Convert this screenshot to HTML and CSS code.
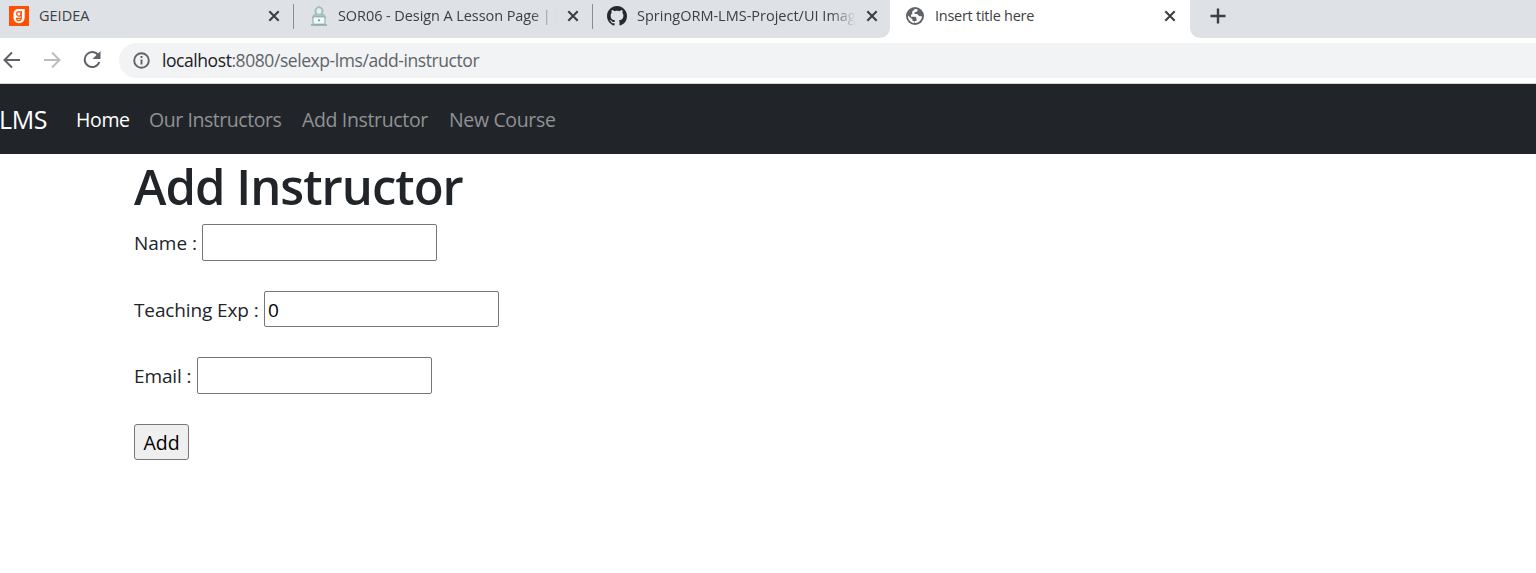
FILE: index.html
```
<!DOCTYPE html>
<html lang="en">
<head>
<meta charset="utf-8">
<title>Insert title here</title>
<link rel="stylesheet" href="styles.css">
</head>
<body>
<div class="tabs">
  <div class="tab-group">
    <div class="tab tab-geidea">
      <svg class="favicon" width="20" height="20" viewBox="0 0 20 20"><path fill="#ff4f00" d="M0 0h20v20H0z"/><path fill="#fff" d="M9.500 3H15.700V11C15.700 14.800 13.300 17.200 10 17.200C6.800 17.200 4.500 15 4.500 11.600V8C4.500 5 6.500 3 9.500 3z"/><g fill="none" stroke="#ff4f00" stroke-width="1.200"><circle cx="9.900" cy="7.900" r="2.200"/><path d="M12.300 5v6.700c0 2-1 2.900-2.400 2.900s-2.300-.8-2.300-2.200h4.500"/></g></svg>
      <span class="tab-title"><span class="t-geidea">GEIDEA</span></span>
      <svg class="close" width="12" height="12" viewBox="0 0 12 12"><path d="M1.300 1.300l9.400 9.400M10.700 1.300l-9.400 9.400"/></svg>
    </div>
    <div class="tab tab-lesson">
      <svg class="favicon" width="18" height="20" viewBox="0 0 18 20"><path fill="#a9c4c3" stroke="#8fb0ae" stroke-width=".8" d="M2.500 12Q2.500 8.500 6 8L5 6V4.500Q5.500 1.500 9 .5Q12.500 1.500 13 4.500V6l-1 2q3.500.5 3.500 4z"/><ellipse cx="9" cy="5" rx="2.400" ry="2.700" fill="#e9f0f0"/><rect x="3" y="10.800" width="12" height="7.400" rx="1" fill="#f4f8f7" stroke="#86aaa8"/><path d="M1 19h16" stroke="#86aaa8" stroke-width="1.500"/><circle cx="9" cy="14.300" r="1.100" fill="#709d9a"/></svg>
      <span class="tab-title faded"><span class="t-lesson">SOR06 - Design A Lesson Page | E</span></span>
      <svg class="close" width="12" height="12" viewBox="0 0 12 12"><path d="M1.300 1.300l9.400 9.400M10.700 1.300l-9.400 9.400"/></svg>
    </div>
    <div class="tab tab-github">
      <svg class="favicon" width="20" height="20" viewBox="0 0 16 16"><path fill="#24292f" d="M8 0C3.580 0 0 3.580 0 8c0 3.540 2.290 6.530 5.470 7.590.4.070.55-.17.55-.38 0-.19-.01-.82-.01-1.490-2.010.37-2.530-.49-2.690-.94-.09-.23-.48-.94-.82-1.130-.28-.15-.68-.52-.01-.53.630-.01 1.080.58 1.230.82.72 1.210 1.870.87 2.330.66.070-.52.280-.87.510-1.070-1.780-.2-3.640-.89-3.640-3.950 0-.87.31-1.590.82-2.150-.08-.2-.36-1.020.08-2.120 0 0 .67-.21 2.200.82.640-.18 1.320-.27 2-.27s1.360.09 2 .27c1.530-1.040 2.200-.82 2.200-.82.440 1.100.160 1.920.08 2.120.51.56.82 1.270.82 2.150 0 3.070-1.870 3.750-3.650 3.950.290.250.54.73.54 1.480 0 1.070-.01 1.930-.01 2.200 0 .210.150.460.55.38A8.010 8.010 0 0 0 16 8c0-4.420-3.580-8-8-8z"/></svg>
      <span class="tab-title faded"><span class="t-github">SpringORM-LMS-Project/UI Imag</span></span>
      <svg class="close" width="12" height="12" viewBox="0 0 12 12"><path d="M1.300 1.300l9.400 9.400M10.700 1.300l-9.400 9.400"/></svg>
    </div>
  </div>
  <div class="tab tab-active">
    <svg class="favicon" width="18" height="18" viewBox="0 0 18 18"><circle cx="9" cy="9" r="9" fill="#5f6368"/><path fill="#fff" d="M11.500 2.300C12 4.300 10.800 5 8.600 5.200V7H10.500C12.500 7 12.500 9.300 14 9.300H16C16 11.200 14.800 13.500 13 14.800C11.500 15.800 10 16.100 8.500 16V14H10.500V11.500C10.500 10.300 9.800 9.700 8.500 9.700H5V7.500H6.300V5C6.300 3.700 7 3.300 8.300 3.200V2.100Q10 1.700 11.500 2.300z"/><path fill="#fff" d="M2 8.500L6.500 12.500V14H8V16C4.500 15.500 1.700 12.500 2 8.500z"/></svg>
    <span class="tab-title"><span class="t-insert">Insert title here</span></span>
    <svg class="close" width="12" height="12" viewBox="0 0 12 12"><path d="M1.300 1.300l9.400 9.400M10.700 1.300l-9.400 9.400"/></svg>
  </div>
  <div class="tab-rest">
    <svg width="16" height="16" viewBox="0 0 16 16"><path class="plus" d="M8 .5v15M.5 8h15"/></svg>
  </div>
</div>
<div class="toolbar">
  <svg class="nav-icon back" width="18" height="18" viewBox="0 0 18 18"><path d="M17 9H2M9 1.500L1.500 9 9 16.500"/></svg>
  <svg class="nav-icon forward" width="18" height="18" viewBox="0 0 18 18"><path d="M1 9h15M9 1.500L16.500 9 9 16.500"/></svg>
  <svg class="nav-icon reload" width="18" height="18" viewBox="0 0 18 18"><path d="M15.500 4.500A7.500 7.500 0 1 0 16.300 11"/><path class="head" d="M17.500 0v8h-8z"/></svg>
  <div class="address">
    <svg width="17" height="17" viewBox="0 0 17 17"><circle cx="8.500" cy="8.500" r="7.300" fill="none" stroke="#5f6368" stroke-width="1.900"/><path d="M8.500 4v2M8.500 7.500v5" stroke="#5f6368" stroke-width="1.900"/></svg>
    <span class="url"><span class="host">localhost</span>:8080/selexp-lms/add-instructor</span>
  </div>
</div>
<nav class="navbar">
  <a class="brand">LMS</a>
  <a class="link home">Home</a>
  <a class="link ours">Our Instructors</a>
  <a class="link add">Add Instructor</a>
  <a class="link course">New Course</a>
</nav>
<main class="container">
  <h1>Add Instructor</h1>
  <form>
    <div class="row"><label class="l-name" for="name">Name :</label><input id="name" type="text"></div>
    <div class="row row-exp"><label class="l-exp" for="exp">Teaching Exp :</label><input id="exp" type="text" value="0"></div>
    <div class="row"><label class="l-email" for="email">Email :</label><input id="email" type="text"></div>
    <button type="button">Add</button>
  </form>
</main>
</body>
</html>
```
FILE: styles.css
```
* { box-sizing: border-box; }
body { margin: 0; background: #fff; color: #212529; font-family: "Open Sans", "Noto Sans", sans-serif; overflow: hidden; }
svg { flex: none; display: block; }
.tabs { display: flex; height: 38px; background: #fff; }
.tab-group { display: flex; width: 890px; background: #dee1e6; border-radius: 0 0 10px 0; }
.tab { display: flex; align-items: center; height: 32px; font-size: 14.500px; line-height: 20px; color: #3c4043; white-space: nowrap; }
.tab-title { flex: 1; min-width: 0; overflow: hidden; }
.faded { mask-image: linear-gradient(to right, #000 calc(100% - 26px), transparent); }
.t-lesson { letter-spacing: -0.080px; }
.t-insert { letter-spacing: -0.260px; }
.close path { fill: none; stroke: #3c4043; stroke-width: 2.100; }
.tab-geidea { width: 294px; padding: 0 14px 0 9px; gap: 10px; }
.tab-lesson { width: 299px; padding: 0 14px 0 16px; gap: 10px; }
.tab-github { width: 297px; padding: 0 12px 0 14px; gap: 10px; }
.tab-geidea, .tab-lesson { background: linear-gradient(#8a8d91, #8a8d91) right 0 top 4px / 1px 25px no-repeat; }
.tab-active { width: 300px; padding: 0 14px 0 16px; gap: 11px; }
.tab-rest { flex: 1; padding: 8px 0 0 20px; background: #dee1e6; border-radius: 0 0 0 10px; }
.plus { fill: none; stroke: #3c4043; stroke-width: 2.400; }
.toolbar { display: flex; align-items: center; height: 46px; padding: 0 0 1px 3px; border-bottom: 1px solid #d5d7da; }
.nav-icon path { fill: none; stroke: #5f6368; stroke-width: 2; }
.forward { margin-left: 22px; }
.forward path { stroke: #babcbe; }
.reload { margin-left: 22px; }
.nav-icon .head { fill: #5f6368; stroke: none; }
.address { flex: 1; display: flex; align-items: center; gap: 12px; height: 35px; margin-left: 18px; padding-left: 14px; background: #f1f3f4; border-radius: 18px 0 0 18px; }
.url { font-size: 17.500px; line-height: 24px; letter-spacing: -0.430px; color: #5f6368; white-space: nowrap; }
.host { color: #202124; }
.navbar { display: flex; align-items: center; height: 70px; padding-top: 2px; background: #212529; white-space: nowrap; }
.brand { width: 77px; margin-left: -1px; color: #fff; font-size: 25px; line-height: 38px; letter-spacing: -0.400px; padding-bottom: 2px; }
.link { color: #909294; font-size: 19.500px; line-height: 30px; letter-spacing: -0.350px; }
.home { width: 73px; color: #fff; }
.ours { width: 153px; letter-spacing: -0.440px; }
.add { width: 147px; }
.container { padding-left: 134px; }
h1 { margin: 0; height: 70px; font-size: 49px; line-height: 64px; font-weight: 600; letter-spacing: -0.980px; white-space: nowrap; }
.row { display: flex; align-items: center; height: 37px; margin-bottom: 30px; font-size: 19px; line-height: 30px; white-space: nowrap; }
.row-exp { height: 36px; }
.l-name { width: 68px; }
.l-exp { width: 130px; padding-top: 1px; letter-spacing: -0.120px; }
.l-email { width: 63px; letter-spacing: -0.120px; }
input { width: 235px; height: 100%; padding: 2px 3px 0; border: 1px solid #767676; border-radius: 2px; background: #fff; color: #000; font: inherit; }
button { display: block; width: 55px; height: 36px; padding: 1px 0 0; border: 1px solid #767676; border-radius: 3px; background: #efefef; color: #000; font: 19.500px/30px "Open Sans", sans-serif; }
```
